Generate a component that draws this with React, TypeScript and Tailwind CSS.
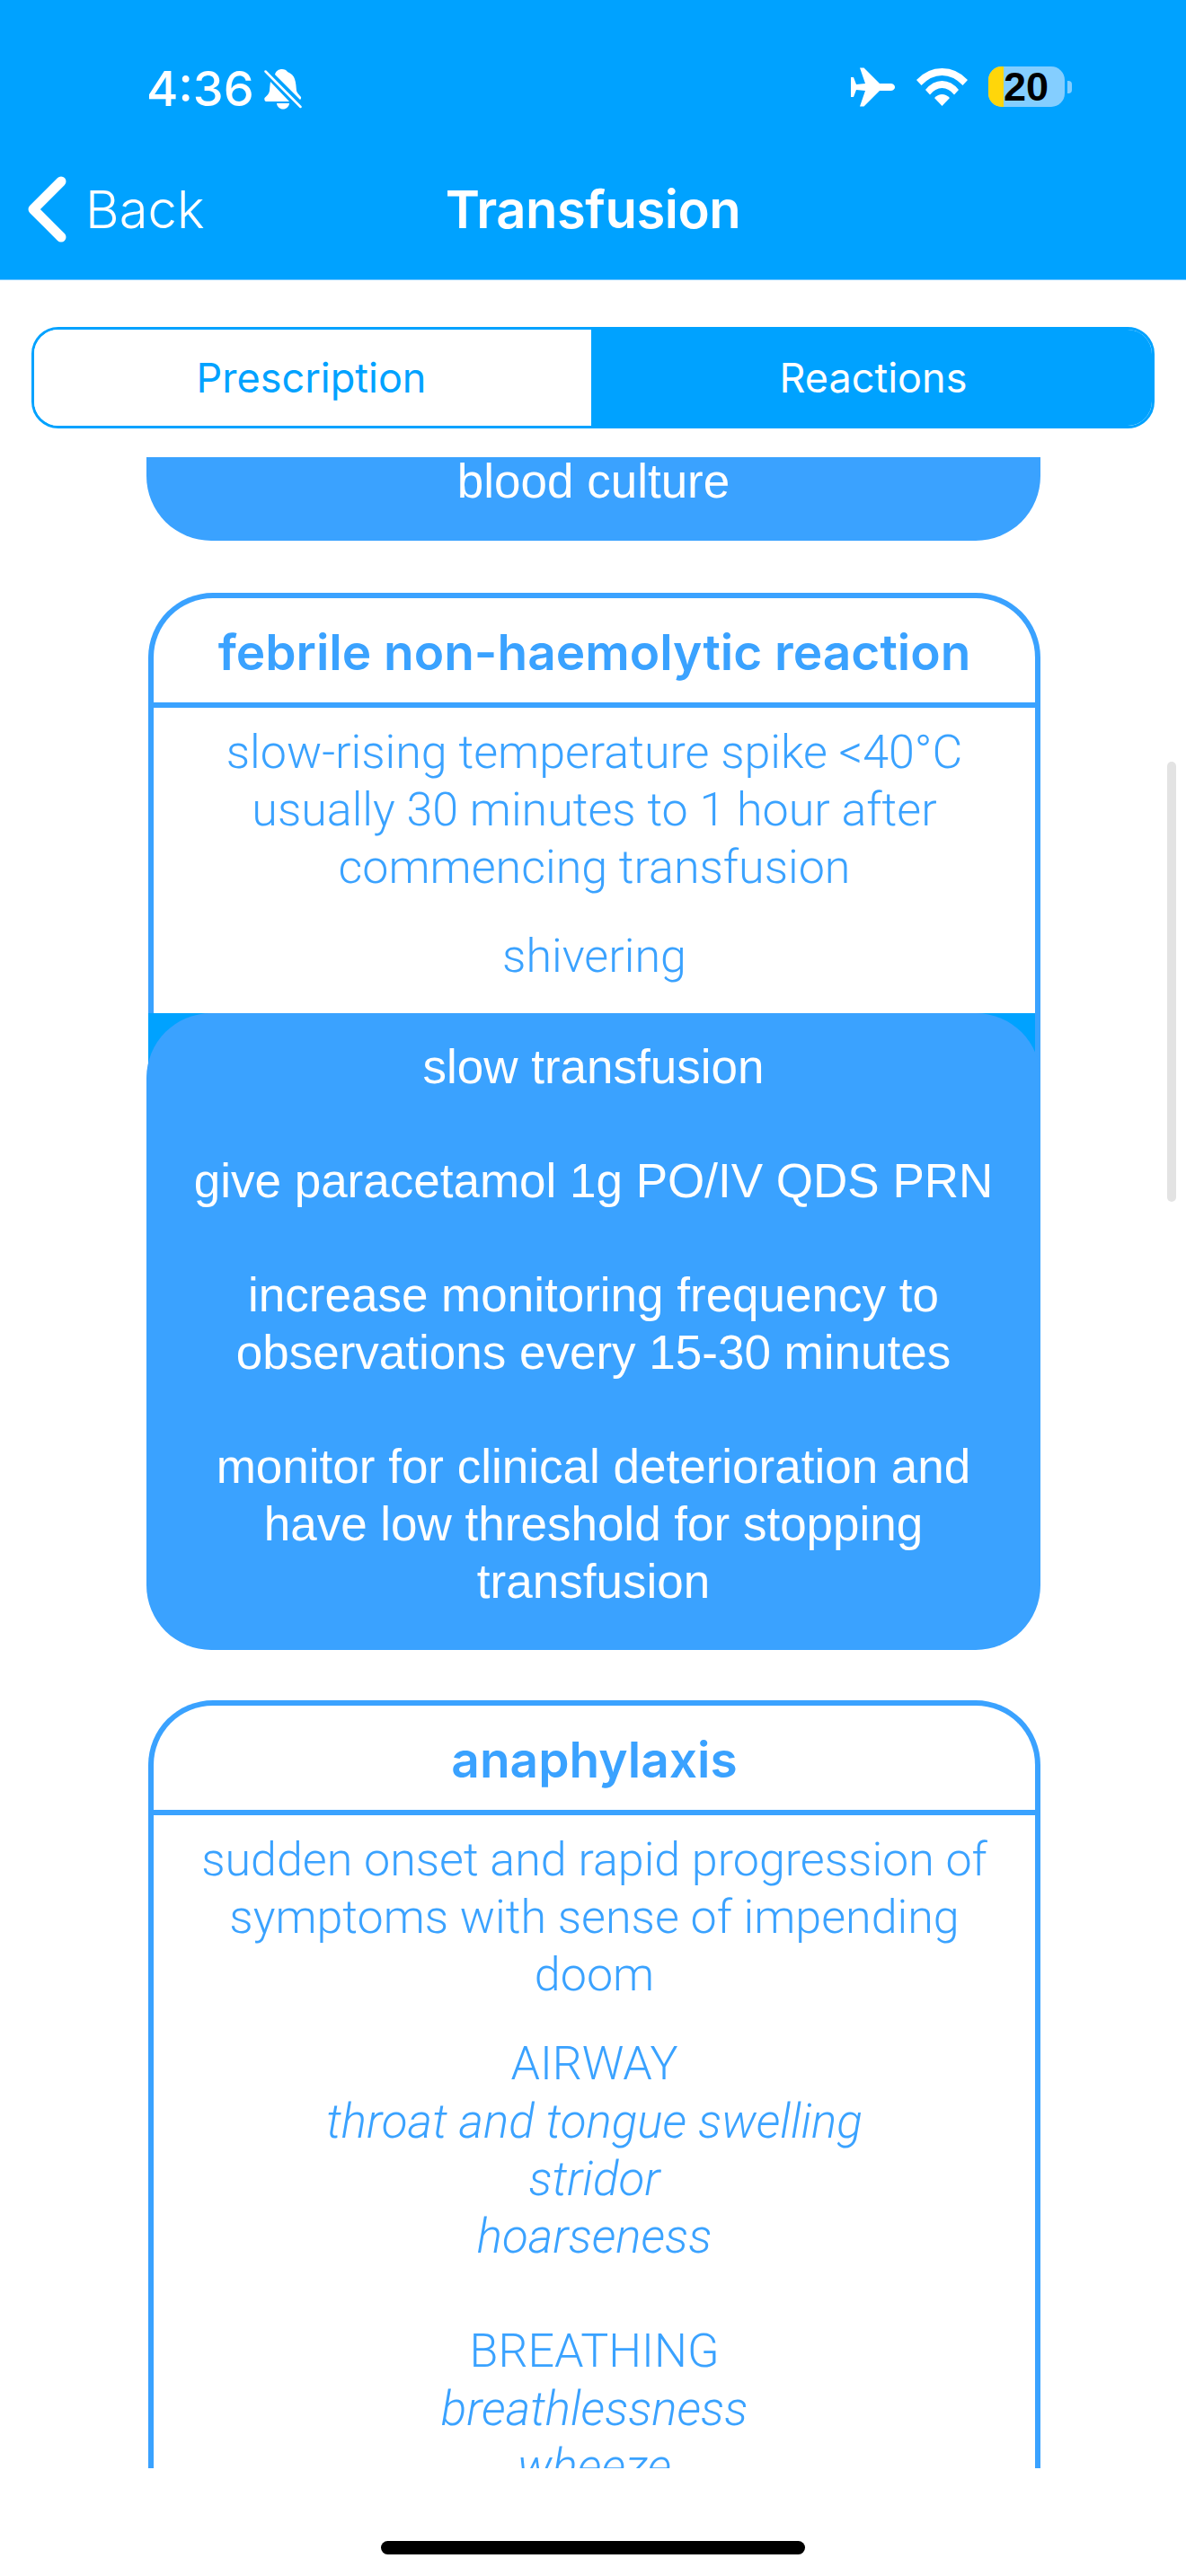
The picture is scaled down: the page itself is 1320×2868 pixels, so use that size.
import React from "react";

const ui = "font-['Inter',sans-serif]";
const blue = "font-['Roboto',sans-serif] font-light text-[52px] text-[#3AA2FF]";
const white = "font-['Liberation_Sans',sans-serif] text-[53px] text-white";

function Bell() {
  return (
    <svg width="42" height="45" viewBox="0 0 42 45" className="ml-[11px] fill-white">
      <path d="M12 6c.5-2 1.500-4 3-4.500C16 .5 18 0 20 0c2.500 0 5 1 6 3 4 1.500 7 4.500 8 8 1.500 4 1.500 9 2 13 .5 2.500 3 4.500 5 7 .3 1.200-.2 2.500-1 3z" />
      <path d="M7 14l21 22H2.500C.5 36 0 33.500.5 32c3-2.500 5-5 5.500-8 .3-3.500.5-7 1-10z" />
      <path d="M14 38h14c-.4 4-3.500 6.500-7 6.500s-6.600-2.500-7-6.500z" />
      <path d="M1.500 2.500l39 39.500" stroke="white" strokeWidth="2.500" strokeLinecap="round" fill="none" />
    </svg>
  );
}

function Plane() {
  return (
    <svg width="49" height="44" viewBox="0 0 49 44" className="fill-white">
      <path d="M10 .5h4.500L32 18h12c2.500 0 5 1.500 5 4s-2.500 4-5 4H32L14.500 43.500H10L16 26l-10-1-3 8H0V11h3l3 8 10-1z" />
    </svg>
  );
}

function Wifi() {
  return (
    <svg width="57" height="42" viewBox="0 0 57 42" className="fill-white">
      <path d="M0 13Q12 0 28.500 0T57 13l-5.500 6Q41 8 28.500 8T5.500 19z" />
      <path d="M10 24q8-10 18.500-10T47 24l-5 5.500Q36 22 28.500 22T15 29.500z" />
      <path d="M20 33q4-4 8.500-4t8.500 4l-8.500 9z" />
    </svg>
  );
}

function Battery() {
  return (
    <div className="ml-[23px] flex items-center">
      <div className="flex h-[45px] w-[85px] items-center rounded-[15px] bg-[#84CEFF]">
        <div className="h-full w-[17px] shrink-0 rounded-l-[15px] bg-[#FFD60A]" />
        <span className="font-['Liberation_Sans',sans-serif] text-[45px] font-bold leading-none text-black">20</span>
      </div>
      <div className="ml-[3px] h-[14px] w-[5px] rounded-r-[4px] bg-[#84CEFF]" />
    </div>
  );
}

function Card({ title, children }: { title: string; children: React.ReactNode }) {
  return (
    <div className="ml-[165px] w-[993px] overflow-hidden rounded-t-[72px] border-x-[6px] border-t-[6px] border-[#3AA2FF] bg-white">
      <div className={`${ui} flex h-[122px] items-center justify-center border-b-[6px] border-[#3AA2FF] pt-[3px] text-[55px] font-semibold text-[#3AA2FF]`}>
        {title}
      </div>
      {children}
    </div>
  );
}

export default function App() {
  return (
    <div className="relative flex h-[2868px] w-[1320px] flex-col overflow-hidden bg-white">
      <header className="h-[312px] shrink-0 border-b border-[#7CCBFF] bg-[#00A2FF] text-white">
        <div className="flex h-[188px] items-start justify-between pt-[74px] pl-[163px] pr-[127px]">
          <div className="flex items-center">
            <span className={`${ui} text-[54px] font-medium leading-[50px]`}>4:36</span>
            <Bell />
          </div>
          <div className="flex items-center">
            <Plane />
            <div className="ml-[24px]"><Wifi /></div>
            <Battery />
          </div>
        </div>
        <div className="relative flex h-[90px] items-center">
          <svg width="43" height="74" viewBox="0 0 43 74" className="ml-[31px] fill-none stroke-white">
            <path d="M37 6L6 37l31 31" strokeWidth="11" strokeLinecap="round" strokeLinejoin="round" />
          </svg>
          <span className={`${ui} ml-[21px] text-[58px] font-light leading-none`}>Back</span>
          <span className={`${ui} absolute inset-x-0 text-center text-[58px] font-semibold leading-none tracking-[-0.5px]`}>Transfusion</span>
        </div>
      </header>

      <nav className="pl-[35px] pt-[52px]">
        <div className={`${ui} flex h-[113px] w-[1250px] overflow-hidden rounded-[30px] border-[3px] border-[#00A2FF] text-[45px]`}>
          <div className="flex w-[620px] items-center justify-center bg-white pr-[3px] text-[#00A2FF]">Prescription</div>
          <div className="flex flex-1 items-center justify-center bg-[#00A2FF] pl-[4px] text-white">Reactions</div>
        </div>
      </nav>

      <main className="mt-[32px] h-[2239px] overflow-hidden text-center leading-[64px]">
        <div className={`${white} ml-[163px] flex h-[93px] w-[995px] justify-center rounded-b-[72px] bg-[#3AA2FF] leading-[54px]`}>
          blood culture
        </div>

        <div className="mt-[58px]">
          <Card title="febrile non-haemolytic reaction">
            <div className={`${blue} pt-[18px] pb-[31px]`}>
              <p>slow-rising temperature spike &lt;40°C<br />usually 30 minutes to 1 hour after<br />commencing transfusion</p>
              <p className="mt-[35px]">shivering</p>
            </div>
          </Card>
          <div className="relative ml-[163px] w-[995px]">
            <div className="absolute top-0 right-0 left-[2px] h-[72px] border-r-[6px] border-[#3AA2FF] bg-[#00A2FF]" />
            <div className={`${white} relative rounded-[72px] bg-[#3AA2FF] pt-[28px] pb-[44px]`}>
              <p>slow transfusion</p>
              <p className="mt-[63px]">give paracetamol 1g PO/IV QDS PRN</p>
              <p className="mt-[63px]">increase monitoring frequency to<br />observations every 15-30 minutes</p>
              <p className="mt-[63px]">monitor for clinical deterioration and<br />have low threshold for stopping<br />transfusion</p>
            </div>
          </div>
        </div>

        <div className="mt-[56px]">
          <Card title="anaphylaxis">
            <div className={`${blue} pt-[18px]`}>
              <p>sudden onset and rapid progression of<br />symptoms with sense of impending<br />doom</p>
              <div className="mt-[35px]">
                <p>AIRWAY</p>
                <em className="block text-[53px]">throat and tongue swelling<br />stridor<br />hoarseness</em>
              </div>
              <div className="mt-[64px]">
                <p>BREATHING</p>
                <em className="block text-[53px]">breathlessness<br />wheeze</em>
              </div>
            </div>
          </Card>
        </div>
      </main>

      <div className="absolute top-[848px] right-[11px] h-[490px] w-[10px] rounded-full bg-[#E3E3E3]" />

      <div className="mt-[81px] flex justify-center">
        <div className="h-[15px] w-[472px] rounded-full bg-black" />
      </div>
    </div>
  );
}
